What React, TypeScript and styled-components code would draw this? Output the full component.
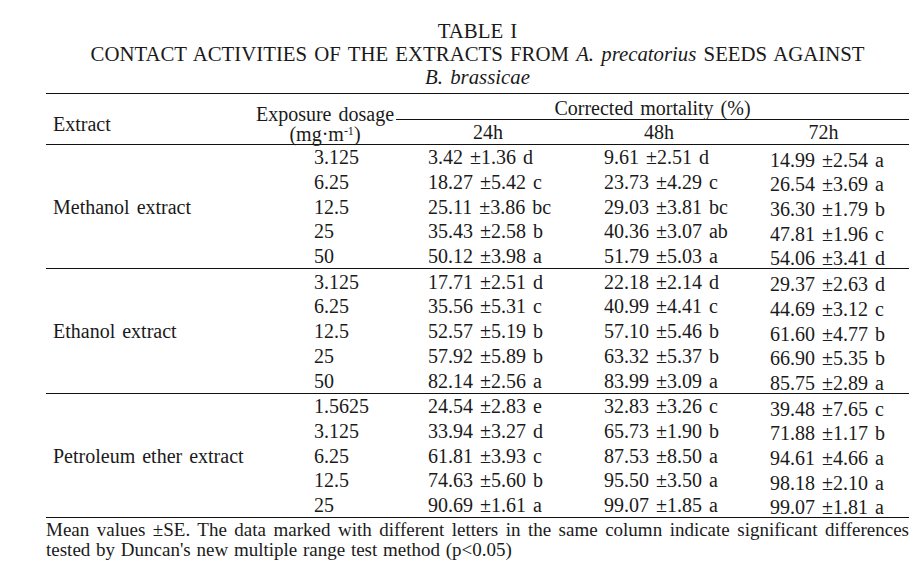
import React from "react";
import styled, { createGlobalStyle } from "styled-components";

const GlobalStyle = createGlobalStyle`
  html, body {
    margin: 0;
    padding: 0;
    background: #ffffff;
  }
  body {
    font-family: "Liberation Serif", "Times New Roman", serif;
    color: #1a1a1a;
  }
`;

const Page = styled.div`
  width: 863px;
  padding: 19px 0 0 46px;
`;

const Caption = styled.div`
  text-align: center;
  font-size: 20.8px;
  line-height: 23px;
  word-spacing: 2px;
`;

const CaptionLine = styled.div`
  height: 23px;
`;

const Table = styled.table`
  width: 863px;
  margin-top: 5px;
  border-collapse: collapse;
  table-layout: fixed;
  font-size: 20px;
  word-spacing: 2px;
  border-top: 1.5px solid #111;
  border-bottom: 1.5px solid #111;
`;

const Col = styled.col<{ $w: number }>`
  width: ${(p) => p.$w}px;
`;

const Head = styled.thead`
  border-bottom: 1.5px solid #111;
`;

const HeadRow = styled.tr<{ $h: number }>`
  height: ${(p) => p.$h}px;
`;

const HeadCell = styled.th<{ $left?: boolean; $rule?: boolean; $top?: number }>`
  font-weight: normal;
  text-align: ${(p) => (p.$left ? "left" : "center")};
  padding: ${(p) => p.$top ?? 0}px 0 0 ${(p) => (p.$left ? 7 : 0)}px;
  line-height: 20px;
  vertical-align: ${(p) => (p.$top !== undefined ? "top" : "middle")};
  border-bottom: ${(p) => (p.$rule ? "1.5px solid #111" : "none")};
`;

const Group = styled.tbody`
  border-bottom: 1.5px solid #111;
`;

const Cell = styled.td<{ $pad: number; $drop?: boolean }>`
  padding: ${(p) => (p.$drop ? "4.7px 0 0" : "2.35px 0 2.35px")};
  padding-left: ${(p) => p.$pad}px;
  line-height: 20px;
  white-space: nowrap;
  vertical-align: middle;
`;

const NameCell = styled.td`
  padding: 0 0 0 7px;
  vertical-align: middle;
  line-height: 20px;
`;

const Sup = styled.sup`
  font-size: 12px;
  line-height: 0;
  vertical-align: 6px;
`;

const Note = styled.p<{ $full?: boolean }>`
  margin: 0;
  font-size: 19px;
  line-height: 20px;
  word-spacing: 1px;
  text-align: ${(p) => (p.$full ? "justify" : "left")};
  text-align-last: ${(p) => (p.$full ? "justify" : "auto")};
`;

const Notes = styled.div`
  padding-top: 2px;
`;

type Row = [string, string, string, string];

const GROUPS: { name: string; rows: Row[] }[] = [
  {
    name: "Methanol extract",
    rows: [
      ["3.125", "3.42 ±1.36 d", "9.61 ±2.51 d", "14.99 ±2.54 a"],
      ["6.25", "18.27 ±5.42 c", "23.73 ±4.29 c", "26.54 ±3.69 a"],
      ["12.5", "25.11 ±3.86 bc", "29.03 ±3.81 bc", "36.30 ±1.79 b"],
      ["25", "35.43 ±2.58 b", "40.36 ±3.07 ab", "47.81 ±1.96 c"],
      ["50", "50.12 ±3.98 a", "51.79 ±5.03 a", "54.06 ±3.41 d"],
    ],
  },
  {
    name: "Ethanol extract",
    rows: [
      ["3.125", "17.71 ±2.51 d", "22.18 ±2.14 d", "29.37 ±2.63 d"],
      ["6.25", "35.56 ±5.31 c", "40.99 ±4.41 c", "44.69 ±3.12 c"],
      ["12.5", "52.57 ±5.19 b", "57.10 ±5.46 b", "61.60 ±4.77 b"],
      ["25", "57.92 ±5.89 b", "63.32 ±5.37 b", "66.90 ±5.35 b"],
      ["50", "82.14 ±2.56 a", "83.99 ±3.09 a", "85.75 ±2.89 a"],
    ],
  },
  {
    name: "Petroleum ether extract",
    rows: [
      ["1.5625", "24.54 ±2.83 e", "32.83 ±3.26 c", "39.48 ±7.65 c"],
      ["3.125", "33.94 ±3.27 d", "65.73 ±1.90 b", "71.88 ±1.17 b"],
      ["6.25", "61.81 ±3.93 c", "87.53 ±8.50 a", "94.61 ±4.66 a"],
      ["12.5", "74.63 ±5.60 b", "95.50 ±3.50 a", "98.18 ±2.10 a"],
      ["25", "90.69 ±1.61 a", "99.07 ±1.85 a", "99.07 ±1.81 a"],
    ],
  },
];

// left offsets of the body text inside each value column
const PADS = [60, 32, 24, 32];

const App: React.FC = () => {
  return (
    <Page>
      <GlobalStyle />
      <Caption>
        <CaptionLine>TABLE I</CaptionLine>
        <CaptionLine>
          CONTACT ACTIVITIES OF THE EXTRACTS FROM <i>A. precatorius</i> SEEDS AGAINST
        </CaptionLine>
        <CaptionLine>
          <i>B. brassicae</i>
        </CaptionLine>
      </Caption>

      <Table>
        <colgroup>
          <Col $w={208} />
          <Col $w={142} />
          <Col $w={184} />
          <Col $w={158} />
          <Col $w={171} />
        </colgroup>
        <Head>
          <HeadRow $h={25.5}>
            <HeadCell rowSpan={2} $left $top={20}>
              Extract
            </HeadCell>
            <HeadCell rowSpan={2} $top={10}>
              Exposure dosage
              <br />
              (mg·m<Sup>-1</Sup>)
            </HeadCell>
            <HeadCell colSpan={3} $rule $top={4}>
              Corrected mortality (%)
            </HeadCell>
          </HeadRow>
          <HeadRow $h={24.5}>
            <HeadCell>24h</HeadCell>
            <HeadCell>48h</HeadCell>
            <HeadCell>72h</HeadCell>
          </HeadRow>
        </Head>
        {GROUPS.map((g) => (
          <Group key={g.name}>
            {g.rows.map((r, i) => (
              <tr key={r[0]}>
                {i === 0 && <NameCell rowSpan={g.rows.length}>{g.name}</NameCell>}
                {r.map((v, j) => (
                  <Cell key={j} $pad={PADS[j]} $drop={j === 3}>
                    {v}
                  </Cell>
                ))}
              </tr>
            ))}
          </Group>
        ))}
      </Table>

      <Notes>
        <Note $full>
          Mean values ±SE. The data marked with different letters in the same column indicate significant differences
        </Note>
        <Note>tested by Duncan's new multiple range test method (p&lt;0.05)</Note>
      </Notes>
    </Page>
  );
};

export default App;
